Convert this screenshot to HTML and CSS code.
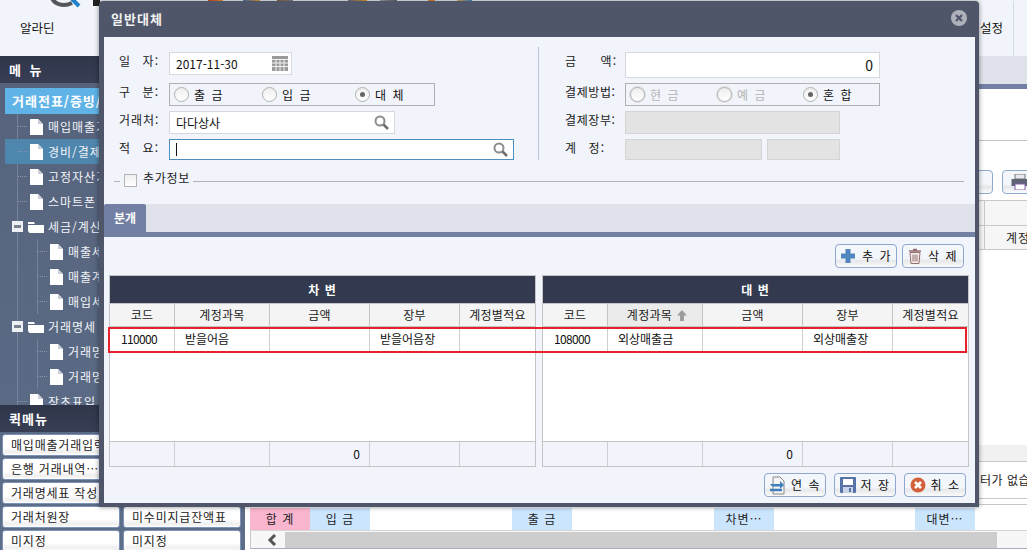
FILE: index.html
```html
<!DOCTYPE html>
<html lang="ko">
<head>
<meta charset="utf-8">
<title>일반대체</title>
<link rel="stylesheet" href="styles.css">
</head>
<body>
<svg class="defs" width="0" height="0" aria-hidden="true">
  <symbol id="doc" viewBox="0 0 13 16"><path d="M0 0H8L13 5V16H0Z" fill="#fff"/><path d="M8 0V5H13" fill="#c9ced8"/></symbol>
  <symbol id="folder" viewBox="0 0 16 12"><path d="M0 3V1H6L7 3Z" fill="#fff"/><path d="M0 4H16V12H1.500L0 10Z" fill="#fff"/></symbol>
  <symbol id="minus" viewBox="0 0 11 11"><rect width="11" height="11" fill="#eef0f3"/><rect x="2" y="4" width="7" height="3" fill="#77808f"/></symbol>
  <symbol id="search" viewBox="0 0 15 15"><circle cx="6" cy="6" r="4.500" fill="#fff" stroke="#8d8d8d" stroke-width="2"/><path d="M9.500 9.500L14 14" stroke="#6d6d6d" stroke-width="2.500"/></symbol>
</svg>

<div class="app">
  <header class="topbar">
    <div class="strip"></div>
    <svg class="logo" width="50" height="8" viewBox="0 0 50 8"><path d="M1 -6C2 5 14 7 22 3" fill="none" stroke="#55565a" stroke-width="4"/><path d="M22 -1L29 6" stroke="#1f82c8" stroke-width="4"/><rect x="43" y="0" width="7" height="6" fill="#222"/></svg>
    <div class="topbar-row">
      <span class="top-item">알라딘</span>
      <span class="top-set">설정</span>
    </div>
  </header>

  <div class="workspace">
    <aside class="sidebar">
      <h2 class="side-head menu-head">메 뉴</h2>
      <div class="menu">
        <div class="menu-active">거래전표/증빙/</div>
        <ul class="tree">
          <li class="node l1"><i class="tick"></i><svg class="ic-doc"><use href="#doc"/></svg>매입매출거</li>
          <li class="node l1 selected"><i class="tick"></i><svg class="ic-doc"><use href="#doc"/></svg>경비/결제</li>
          <li class="node l1"><i class="tick"></i><svg class="ic-doc"><use href="#doc"/></svg>고정자산거</li>
          <li class="node l1"><i class="tick"></i><svg class="ic-doc"><use href="#doc"/></svg>스마트폰</li>
          <li class="node folder"><svg class="ic-minus"><use href="#minus"/></svg><svg class="ic-folder"><use href="#folder"/></svg>세금/계산</li>
          <li class="node l2"><i class="tick"></i><svg class="ic-doc"><use href="#doc"/></svg>매출세</li>
          <li class="node l2"><i class="tick"></i><svg class="ic-doc"><use href="#doc"/></svg>매출계</li>
          <li class="node l2"><i class="tick"></i><svg class="ic-doc"><use href="#doc"/></svg>매입세</li>
          <li class="node folder"><svg class="ic-minus"><use href="#minus"/></svg><svg class="ic-folder"><use href="#folder"/></svg>거래명세</li>
          <li class="node l2"><i class="tick"></i><svg class="ic-doc"><use href="#doc"/></svg>거래명</li>
          <li class="node l2"><i class="tick"></i><svg class="ic-doc"><use href="#doc"/></svg>거래명</li>
          <li class="node l1"><i class="tick"></i><svg class="ic-doc"><use href="#doc"/></svg>장초표입</li>
        </ul>
      </div>
      <h2 class="side-head quick-head">퀵메뉴</h2>
      <div class="quick">
        <a class="qbtn">매입매출거래입력</a><a class="qbtn"></a>
        <a class="qbtn">은행 거래내역…</a><a class="qbtn"></a>
        <a class="qbtn">거래명세표 작성</a><a class="qbtn"></a>
        <a class="qbtn">거래처원장</a><a class="qbtn">미수미지급잔액표</a>
        <a class="qbtn">미지정</a><a class="qbtn">미지정</a>
      </div>
    </aside>

    <main class="main">
      <div class="main-tabs"></div>
      <div class="main-filter"></div>
      <div class="main-toolbar">
        <a class="btn main-btn">삭제</a>
        <a class="btn main-print">
          <svg width="18" height="16" viewBox="0 0 18 16"><rect x="4" y="0" width="10" height="5" fill="#e8e8ee" stroke="#777"/><rect x="0.500" y="5" width="17" height="7" fill="#5d6473"/><rect x="4" y="10" width="10" height="6" fill="#fff" stroke="#8a5fb0"/></svg>
        </a>
      </div>
      <div class="main-grid">
        <div class="mg-head"></div>
        <div class="mg-head mg-second"><span class="mg-label">계정별적요</span></div>
        <div class="mg-body"></div>
        <div class="mg-foot"></div>
        <div class="mg-empty">터가 없습니다</div>
      </div>
      <div class="sum">
        <span class="sum-pink">합 계</span><span class="sum-blue">입 금</span><span></span>
        <span class="sum-blue">출 금</span><span></span>
        <span class="sum-blue">차변…</span><span></span>
        <span class="sum-blue">대변…</span><span></span>
      </div>
      <div class="hscroll">
        <span class="hs-arrow"><svg width="10" height="12" viewBox="0 0 10 12"><path d="M8 1L3 6L8 11" fill="none" stroke="#555" stroke-width="3"/></svg></span>
        <span class="hs-thumb"></span>
      </div>
    </main>
  </div>
</div>

<section class="modal">
  <header class="modal-title">
    <span>일반대체</span>
    <svg width="16" height="16" viewBox="0 0 16 16"><circle cx="8" cy="8" r="8" fill="#aeb1ba"/><path d="M5 5L11 11M11 5L5 11" stroke="#50566a" stroke-width="2.200"/></svg>
  </header>

  <div class="modal-body">
    <div class="form">
      <div class="col-left">
        <div class="row r1">
          <label class="lab"><span>일</span><span>자:</span></label>
          <div class="field date">2017-11-30
            <svg class="cal" width="16" height="15" viewBox="0 0 16 15"><rect width="16" height="15" fill="#9a9a9a"/><path d="M0 3.500H16M0 7H16M0 10.500H16M4 3V15M8 3V15M12 3V15" stroke="#f1f1f1" stroke-width="1"/></svg>
          </div>
        </div>
        <div class="row r2">
          <label class="lab"><span>구</span><span>분:</span></label>
          <div class="radios left-radios">
            <span class="opt"><i class="radio"></i>출 금</span>
            <span class="opt"><i class="radio"></i>입 금</span>
            <span class="opt"><i class="radio on"></i>대 체</span>
          </div>
        </div>
        <div class="row r3">
          <label class="lab lab-tight">거래처:</label>
          <div class="field partner">다다상사<svg class="mag"><use href="#search"/></svg></div>
        </div>
        <div class="row r4">
          <label class="lab"><span>적</span><span>요:</span></label>
          <div class="field memo"><i class="caret"></i><svg class="mag"><use href="#search"/></svg></div>
        </div>
      </div>
      <div class="col-right">
        <div class="row r1">
          <label class="lab rlab wide"><span>금</span><span>액:</span></label>
          <div class="field amount">0</div>
        </div>
        <div class="row r2">
          <label class="lab rlab lab-tight">결제방법:</label>
          <div class="radios right-radios">
            <span class="opt off"><i class="radio"></i>현 금</span>
            <span class="opt off"><i class="radio"></i>예 금</span>
            <span class="opt"><i class="radio on"></i>혼 합</span>
          </div>
        </div>
        <div class="row r3">
          <label class="lab rlab lab-tight">결제장부:</label>
          <div class="field locked book"></div>
        </div>
        <div class="row r4">
          <label class="lab rlab"><span>계</span><span>정:</span></label>
          <div class="account">
            <div class="field locked acc-a"></div>
            <div class="field locked acc-b"></div>
          </div>
        </div>
      </div>
    </div>

    <div class="extra">
      <i class="extra-line short"></i>
      <i class="check"></i>
      <span class="extra-text">추가정보</span>
      <i class="extra-line"></i>
    </div>

    <div class="tabbar"><span class="tab">분개</span></div>

    <div class="grid-tools">
      <a class="btn tool">
        <svg width="16" height="16" viewBox="0 0 16 16"><path d="M5.500 1H10.500V5.500H15V10.500H10.500V15H5.500V10.500H1V5.500H5.500Z" fill="#4f86bd"/></svg>
        <span>추 가</span>
      </a>
      <a class="btn tool">
        <svg width="14" height="16" viewBox="0 0 14 16"><path d="M5 1.500H9M1 3H13" stroke="#94706f" stroke-width="1.500"/><path d="M2 4.500H12L11 15.500H3Z" fill="#f5eeee" stroke="#94706f"/><path d="M5 6.500V13.500M7 6.500V13.500M9 6.500V13.500" stroke="#94706f"/></svg>
        <span>삭 제</span>
      </a>
    </div>

    <div class="grids">
      <div class="grid">
        <div class="g-title">차 변</div>
        <div class="g-row g-cols"><span>코드</span><span>계정과목</span><span>금액</span><span>장부</span><span>계정별적요</span></div>
        <div class="g-row g-data"><span class="c">110000</span><span>받을어음</span><span></span><span>받을어음장</span><span></span></div>
        <div class="g-blank"></div>
        <div class="g-row g-foot"><span></span><span></span><span class="num">0</span><span></span><span></span></div>
      </div>
      <div class="grid">
        <div class="g-title">대 변</div>
        <div class="g-row g-cols"><span>코드</span><span class="sorted">계정과목<svg width="10" height="11" viewBox="0 0 10 11"><path d="M5 0L10 5.500H7V11H3V5.500H0Z" fill="#9c9c9c"/></svg></span><span>금액</span><span>장부</span><span>계정별적요</span></div>
        <div class="g-row g-data"><span class="c">108000</span><span>외상매출금</span><span></span><span>외상매출장</span><span></span></div>
        <div class="g-blank"></div>
        <div class="g-row g-foot"><span></span><span></span><span class="num">0</span><span></span><span></span></div>
      </div>
      <div class="highlight"></div>
    </div>

    <div class="actions">
      <a class="btn act">
        <svg width="17" height="19" viewBox="0 0 17 19"><path d="M4 1H11L15 5V18H4Z" fill="#f4f4f4" stroke="#888"/><path d="M1 8H11V5L15 9L11 13V10.500H3Z" fill="#3f7fbd"/><path d="M1 14H13" stroke="#3f7fbd" stroke-width="2.500"/></svg>
        <span>연 속</span>
      </a>
      <a class="btn act">
        <svg width="16" height="16" viewBox="0 0 16 16"><rect width="16" height="16" rx="1" fill="#5873a8"/><rect x="3" y="2" width="10" height="6" fill="#fff"/><rect x="3" y="10" width="10" height="6" fill="#c9d4e8"/><rect x="9" y="11" width="2" height="4" fill="#5873a8"/></svg>
        <span>저 장</span>
      </a>
      <a class="btn act">
        <svg width="16" height="16" viewBox="0 0 16 16"><circle cx="8" cy="8" r="7.500" fill="#d2603a"/><path d="M5 5L11 11M11 5L5 11" stroke="#fff" stroke-width="2.600"/></svg>
        <span>취 소</span>
      </a>
    </div>
  </div>
</section>
</body>
</html>
```

FILE: styles.css
```css
* { box-sizing: border-box; }
html, body { margin: 0; height: 100%; }
body {
  width: 1027px;
  height: 550px;
  overflow: hidden;
  position: relative;
  background: #fff;
  color: #111;
  font: 12px/1 "Noto Sans CJK KR", "Liberation Sans", sans-serif;
}
h2, ul { margin: 0; padding: 0; list-style: none; }
i { display: block; font-style: normal; }
.defs { position: absolute; }

.app { display: flex; flex-direction: column; height: 550px; }

/* top bar */
.topbar { height: 56px; flex: none; background: #f1f4fa; position: relative; overflow: hidden; }
.strip {
  height: 1px;
  background: linear-gradient(90deg,
    transparent 208px, #e2432f 208px, #f0a030 223px, transparent 223px,
    transparent 243px, #4a78c0 243px, #f0a030 260px, transparent 260px,
    transparent 277px, #8a6a3a 277px, #888 293px, transparent 293px,
    transparent 348px, #777 348px, #f0a030 367px, transparent 367px,
    transparent 380px, #aaa 380px, #666 397px, transparent 397px,
    transparent 428px, #f08a30 428px, #f08a30 435px, transparent 435px,
    transparent 457px, #f0b060 457px, #3a90d0 472px, transparent 472px);
}
.logo { position: absolute; left: 50px; top: 0; }
.topbar-row { display: flex; justify-content: space-between; padding: 21px 0 0 20px; }
.top-item { font-size: 12.500px; }
.top-set {
  width: 47px; height: 56px; margin: -21px 13px 0 0;
  padding: 21px 10px 0 0;
  font-size: 12.500px;
  border-right: 1px solid #d5d9e2;
  text-align: right;
}

.workspace { flex: 1; display: flex; min-height: 0; }

/* sidebar */
.sidebar {
  width: 245px; flex: none;
  display: flex; flex-direction: column;
  background: linear-gradient(#56627c, #5d6e88);
  color: #fff;
}
.side-head {
  height: 27px; flex: none;
  display: flex; align-items: center;
  padding-left: 9px;
  background: linear-gradient(#2f364a, #383f55);
  font-size: 13px; font-weight: 700; letter-spacing: 1px;
}
.menu-head { word-spacing: 3px; }
.menu { flex: 1; min-height: 0; overflow: hidden; padding: 5px 0 0 5px; white-space: nowrap; }
.menu-active {
  height: 26px; padding: 6px 0 0 7px;
  background: #5fb3e7;
  font-size: 13px; font-weight: 700; letter-spacing: 1px;
}
.tree {
  background: linear-gradient(#75829b, #75829b) 12px 0 / 1px 100% no-repeat;
}
.node { height: 25px; display: flex; align-items: center; font-size: 12px; letter-spacing: 1px; color: #f2f4f8; }
.node.selected { background: #4f86ae; }
.l1 { padding-left: 13px; }
.l2 { padding-left: 33px; background: linear-gradient(#75829b, #75829b) 32px 0 / 1px 100% no-repeat; }
.tick { width: 9px; height: 1px; margin-right: 3px; background: repeating-linear-gradient(90deg, #8b96ac 0 1px, transparent 1px 2px); }
.ic-doc { width: 13px; height: 16px; margin-right: 5px; flex: none; }
.folder { padding-left: 7px; }
.ic-minus { width: 11px; height: 11px; margin-right: 5px; flex: none; }
.ic-folder { width: 16px; height: 12px; margin-right: 4px; flex: none; }
.quick {
  height: 118px; flex: none; overflow: hidden;
  display: grid; grid-template-columns: 118px 118px; gap: 2px 3px;
  grid-auto-rows: 22px;
  padding: 2px 0 0 2px;
}
.qbtn {
  display: flex; align-items: center; padding-left: 8px;
  white-space: nowrap; overflow: hidden;
  background: linear-gradient(#fff 60%, #eee 85%, #fff);
  border: 1px solid #7c92b8; border-radius: 3px;
  color: #222; letter-spacing: 0.800px; font-size: 12px;
}

/* main behind the dialog */
.main { flex: 1; min-width: 0; display: flex; flex-direction: column; }
.main-tabs { height: 33px; flex: none; background: #dfe2ea; border-bottom: 5px solid #7480a3; }
.main-filter { height: 52px; flex: none; border-bottom: 1px solid #c4c4c4; background: #fff; }
.main-toolbar { height: 59px; flex: none; padding-top: 29px; display: flex; justify-content: flex-end; gap: 9px; }
.main-btn { width: 60px; height: 24px; justify-content: flex-end; padding-right: 6px; }
.main-print { width: 30px; height: 24px; margin-right: -5px; padding-left: 5px; justify-content: flex-start; border-right: 0; }
.main-grid { flex: 1; min-height: 0; margin-left: 5px; display: flex; flex-direction: column; border-bottom: 1px solid #c8c8c8; }
.mg-head {
  height: 25px; flex: none;
  border-top: 1px solid #c8c8c8;
  background: #f6f6f6 linear-gradient(#c8c8c8, #c8c8c8) 734px 0 / 1px 100% no-repeat;
}
.mg-second { border-bottom: 1px solid #c8c8c8; display: flex; align-items: center; padding-left: 756px; white-space: nowrap; }
.mg-label { letter-spacing: 1px; color: #222; }
.mg-body { height: 195px; flex: none; }
.mg-foot { height: 17px; flex: none; background: #f1f1f1; border-bottom: 1px solid #c8c8c8; }
.mg-empty { height: 37px; flex: none; padding: 12px 0 0 730px; white-space: nowrap; color: #222; border-bottom: 1px solid #c8c8c8; letter-spacing: 0.500px; }
.sum {
  height: 23px; flex: none; margin: 3px 0 0 5px;
  border-bottom: 1px solid #d5d5d5;
  display: grid;
  grid-template-columns: 60px 60px 142px 60px 142px 60px 141px 60px 1fr;
}
.sum span { display: flex; align-items: center; justify-content: center; letter-spacing: 1px; color: #222; }
.sum-pink { background: #fbb6cf; }
.sum-blue { background: #cbe5fc; }
.hscroll {
  height: 18px; flex: none; margin: 0 0 1px 5px;
  border-bottom: 1px solid #a8b0c0;
  border-left: 1px solid #c8c8c8;
  padding-top: 1px;
  display: flex; background: #f7f7f7;
}
.hs-arrow { width: 34px; display: flex; align-items: center; justify-content: center; padding-left: 8px; }
.hs-thumb { width: 712px; background: #cdcdcd; }

/* shared button */
.btn {
  display: flex; align-items: center; justify-content: center; gap: 8px;
  background: linear-gradient(#f3f6fb 60%, #e7e8ea 72%, #fbfbfb);
  border: 1px solid #8ea8cf; border-radius: 4px;
  color: #111; letter-spacing: 1px;
}

/* dialog */
.modal {
  position: absolute; left: 99px; top: 1px;
  width: 880px; height: 506px;
  display: flex; flex-direction: column;
  background: #50566a;
  border-radius: 4px 4px 0 0;
  padding: 0 4px 4px 5px;
  box-shadow: 0 0 5px rgba(0, 0, 0, 0.45);
}
.modal-title {
  height: 36px; flex: none;
  display: flex; align-items: center; justify-content: space-between;
  padding: 0 8px 2px 7px;
  color: #f1f1f1; font-size: 13px; font-weight: 700; letter-spacing: 1px;
}
.modal-body { flex: 1; min-height: 0; background: #f1f4fa; display: flex; flex-direction: column; }

.form { display: flex; height: 123px; flex: none; padding: 15px 0 0 15px; }
.col-left { width: 420px; position: relative; }
.col-left::after {
  content: ""; position: absolute; right: 0; top: -5px; bottom: 0; width: 1px; background: #b7c4d8;
}
.col-right { padding-left: 26px; flex: 1; }
.row { display: flex; align-items: flex-start; margin-bottom: 5px; }
.r1 { height: 26px; }
.r2, .r3 { height: 23px; }
.r4 { height: 21px; }
.lab {
  width: 40px; margin-right: 10px; padding-top: 3px; flex: none;
  display: flex; justify-content: space-between;
  letter-spacing: 1px; color: #222; white-space: nowrap;
}
.lab-tight { justify-content: flex-start; }
.rlab { margin-right: 20px; }
.rlab.lab-tight { width: 52px; margin-right: 8px; letter-spacing: 0.600px; }
.rlab.wide { width: 52px; margin-right: 8px; }
.field {
  height: 100%;
  display: flex; align-items: center;
  padding: 0 6px;
  background: #fff;
  border: 1px solid #d5d9df;
  position: relative;
  color: #111;
}
.date { width: 123px; height: 23px; justify-content: space-between; padding-right: 3px; }
.partner { width: 226px; justify-content: space-between; }
.memo { width: 345px; justify-content: space-between; border-color: #4a8fbf; }
.caret { width: 1px; height: 13px; background: #111; }
.mag { width: 15px; height: 15px; flex: none; margin-right: -1px; }
.amount { width: 255px; justify-content: flex-end; font-size: 14px; }
.locked { background: #e3e3e3; border-color: #d4d4d4; }
.book { width: 215px; }
.account { display: flex; gap: 5px; height: 100%; }
.acc-a { width: 137px; }
.acc-b { width: 73px; }

.radios {
  height: 23px;
  display: grid; align-items: center;
  background: transparent;
  border: 1px solid #b0b0b0;
  letter-spacing: 1.500px;
  padding-left: 4px;
}
.left-radios { width: 266px; grid-template-columns: 88px 93px 1fr; }
.right-radios { width: 255px; grid-template-columns: 87px 86px 1fr; }
.opt { display: flex; align-items: center; gap: 5px; color: #111; }
.opt.off { color: #b5b5b5; }
.radio {
  width: 15px; height: 15px; border-radius: 50%;
  border: 1px solid #b0b0b0;
  background: linear-gradient(#eee, #fff);
  display: flex; align-items: center; justify-content: center;
}
.off .radio { box-shadow: 0 0 0 1px #dcdcdc; }
.radio.on::after { content: ""; width: 5px; height: 5px; border-radius: 50%; background: #666; }

.extra { height: 19px; flex: none; display: flex; align-items: center; padding: 0 11px 0 10px; margin-top: 8px; }
.extra-line { flex: 1; height: 1px; background: #b4b4b4; margin-top: 7px; }
.extra-line.short { flex: none; width: 6px; margin-right: 4px; }
.check { width: 13px; height: 13px; flex: none; margin-top: 5px; border: 1px solid #b4b4b4; background: linear-gradient(#eee, #fff); }
.extra-text { margin: 0 3px 0 6px; letter-spacing: 0.700px; color: #222; }

.tabbar { height: 33px; flex: none; margin-top: 17px; background: #dfe2ea; border-bottom: 5px solid #7480a3; display: flex; }
.tab {
  width: 42px; height: 28px;
  display: flex; align-items: center; justify-content: center;
  background: #7480a3; color: #fff; font-weight: 700; border-radius: 2px 2px 0 0;
}
.grid-tools { height: 38px; flex: none; display: flex; justify-content: flex-end; gap: 5px; padding: 7px 11px 0 0; }
.tool { width: 62px; height: 24px; gap: 6px; letter-spacing: 1.500px; }

.grids { display: flex; gap: 6px; padding-left: 5px; height: 192px; flex: none; position: relative; }
.grid {
  width: 427px; display: flex; flex-direction: column;
  border: 1px solid #c4c4c4; background: #fff;
}
.g-title {
  height: 27px; flex: none;
  display: flex; align-items: center; justify-content: center;
  background: #333a4f; color: #fff; font-weight: 700; letter-spacing: 1px;
}
.g-row {
  display: grid;
  grid-template-columns: 65px 95px 100px 90px 1fr;
  height: 25px; flex: none;
}
.g-row span {
  display: flex; align-items: center;
  border-right: 1px solid #cfcfcf;
  min-width: 0; color: #111;
}
.g-row span:last-child { border-right: 0; }
.g-cols { height: 24px; background: #f4f4f4; border-top: 1px solid #c4c4c4; border-bottom: 1px solid #c4c4c4; }
.g-cols span { justify-content: center; border-color: #c4c4c4; white-space: nowrap; letter-spacing: 0.300px; color: #222; }
.g-cols .sorted { background: #ebebeb; gap: 5px; padding-left: 4px; }
.g-data { border-bottom: 1px solid #cfcfcf; }
.g-data span { padding-left: 10px; white-space: nowrap; }
.g-data .c { padding: 0 6px 0 0; justify-content: center; letter-spacing: -0.700px; }
.g-blank { flex: 1; min-height: 0; }
.g-foot { background: #f1f4fa; border-top: 1px solid #c4c4c4; }
.g-foot .num { justify-content: flex-end; padding-right: 9px; }
.highlight {
  position: absolute; left: 4px; top: 52px;
  width: 859px; height: 26px;
  border: 2px solid #e8202c;
}

.actions { display: flex; justify-content: flex-end; gap: 8px; padding: 6px 9px 0 0; }
.act { width: 62px; height: 24px; gap: 5px; letter-spacing: 1.500px; }
```
